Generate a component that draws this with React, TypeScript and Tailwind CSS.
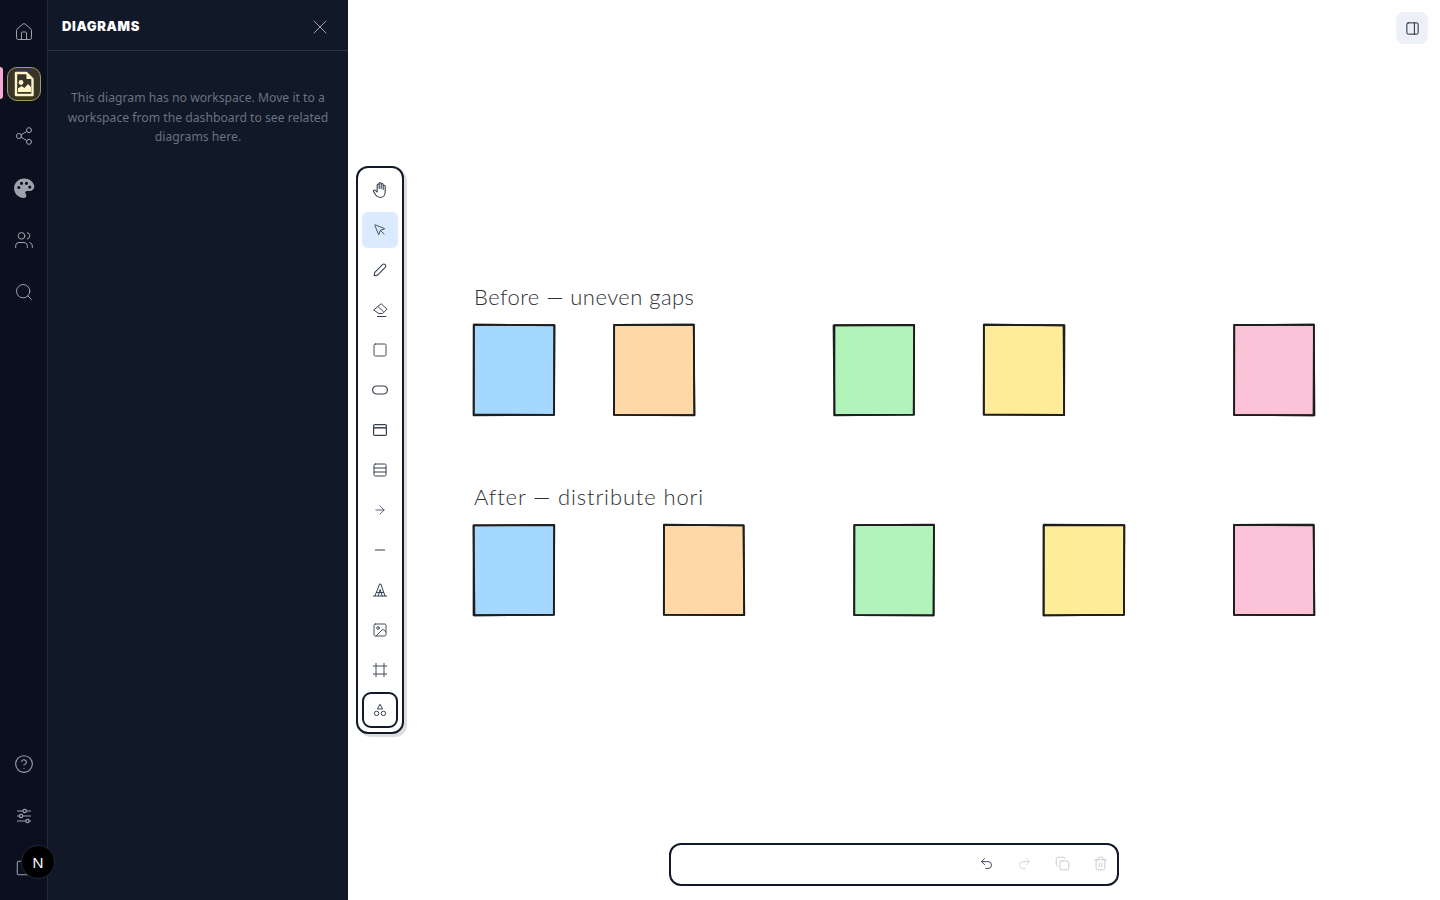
import {
  ArrowRight, CircleHelp, Copy, Frame, Home, Image, Minus, MousePointer, PanelRight,
  Redo2, Rows3, Search, Share2, Square, Trash2, Undo2, Users, X,
} from 'lucide-react';

/* ─── Sketched canvas shapes ─────────────────────────────────────────── */

const row1 = [
  { x: 'left-[124px]', fill: '#a5d8ff', seed: 1 },
  { x: 'left-[264px]', fill: '#ffd8a8', seed: 2 },
  { x: 'left-[484px]', fill: '#b2f2bb', seed: 3 },
  { x: 'left-[634px]', fill: '#ffec99', seed: 4 },
  { x: 'left-[884px]', fill: '#fcc2d7', seed: 5 },
];

const row2 = [
  { x: 'left-[124px]', fill: '#a5d8ff', seed: 6 },
  { x: 'left-[314px]', fill: '#ffd8a8', seed: 7 },
  { x: 'left-[504px]', fill: '#b2f2bb', seed: 8 },
  { x: 'left-[694px]', fill: '#ffec99', seed: 9 },
  { x: 'left-[884px]', fill: '#fcc2d7', seed: 10 },
];

// small repeatable jitter so the two strokes of a box don't sit exactly on top of each other
function jitter(seed: number, n: number) {
  return (((seed * 37 + n * 53) % 11) - 5) * 0.09;
}

function sketchPath(seed: number, o: number) {
  const j = (n: number) => jitter(seed + o * 3, n).toFixed(2);
  const x0 = 2, y0 = 2, x1 = 82, y1 = 92;
  return `M${x0 + +j(1)} ${y0 + +j(2)} L${x1 + +j(3)} ${y0 + +j(4)} L${x1 + +j(5)} ${y1 + +j(6)} L${x0 + +j(7)} ${y1 + +j(8)} Z`;
}

function SketchBox({ className, fill, seed }: { className: string; fill: string; seed: number }) {
  return (
    <svg className={`absolute ${className}`} width="84" height="94" viewBox="0 0 84 94" fill="none">
      <rect x="2" y="2" width="80" height="90" fill={fill} />
      <path d={sketchPath(seed, 0)} stroke="#1e1e1e" strokeWidth="1.8" strokeLinejoin="round" />
      <path d={sketchPath(seed, 1)} stroke="#1e1e1e" strokeWidth="1.8" strokeLinejoin="round" />
    </svg>
  );
}

/* ─── Icons the packages don't have ──────────────────────────────────── */

function DocImageIcon() {
  return (
    <svg width="22" height="26" viewBox="0 0 22 26" fill="none">
      <path d="M3 2h10.5L19.5 8v16H3Z" stroke="#fdf3c4" strokeWidth="2.4" strokeLinejoin="round" />
      <path d="M13.5 2v6h6Z" fill="#fdf3c4" />
      <circle cx="8" cy="11.5" r="2.4" fill="#fdf3c4" />
      <path d="M5 21v-3.5l3.5-2.5 3 2 3.5-4 3 3V21Z" fill="#fdf3c4" />
    </svg>
  );
}

function SlidersIcon() {
  return (
    <svg width="18" height="18" viewBox="0 0 18 18" fill="none" stroke="currentColor" strokeWidth="1.2">
      <path d="M2 4h6M11.5 4H16M2 9h2.500M7.500 9H16M2 14h9M14 14h2" />
      <circle cx="9.700" cy="4" r="1.700" />
      <circle cx="6" cy="9" r="1.700" />
      <circle cx="12.500" cy="14" r="1.700" />
    </svg>
  );
}

function PaletteFilled() {
  return (
    <svg width="22" height="22" viewBox="0 0 24 24" fill="#9ca3af">
      <path fillRule="evenodd" d="M12 1.500C6 1.500 1.200 6.300 1.200 12.200S6 22.800 12 22.800c1.600 0 2.600-1.100 2.600-2.400 0-.7-.3-1.200-.6-1.700-.3-.4-.6-.9-.6-1.400 0-1.100.9-2 2-2h2.400c3 0 5.400-2.200 5.400-5C22.800 5.300 17.900 1.500 12 1.500ZM6.400 13.200a1.700 1.700 0 1 1 0-3.400 1.700 1.700 0 0 1 0 3.400Zm2.900-4.600a1.700 1.700 0 1 1 0-3.400 1.700 1.700 0 0 1 0 3.400Zm5.400 0a1.700 1.700 0 1 1 0-3.400 1.700 1.700 0 0 1 0 3.400Zm3.600 4.100a1.700 1.700 0 1 1 0-3.400 1.700 1.700 0 0 1 0 3.400Z" />
    </svg>
  );
}

function HandIcon() {
  return (
    <svg width="16" height="18" viewBox="0 0 16 18" fill="none" stroke="currentColor" strokeWidth="1.100" strokeLinecap="round" strokeLinejoin="round">
      <path d="M5.200 8.500V4a1 1 0 0 1 2 0v3.500M7.200 7V2.500a1 1 0 0 1 2 0V7.500M9.200 7.500V3.500a1 1 0 0 1 2 0v5M11.200 8V5.200a1 1 0 0 1 2 0V11c0 3-2 5.500-5 5.500-2.500 0-3.500-1-4.500-2.500L1.500 10.500c-.6-1 .8-2 1.700-1.200l2 1.700V8.500" />
    </svg>
  );
}

function PencilIcon() {
  return (
    <svg width="16" height="16" viewBox="0 0 16 16" fill="none" stroke="currentColor" strokeWidth="1.100" strokeLinejoin="round">
      <path d="M2.800 10.400 10.500 2.700a1.900 1.900 0 0 1 2.700 2.700L5.500 13.100l-3.300.6Z" />
    </svg>
  );
}

function EraserIcon() {
  return (
    <svg width="16" height="16" viewBox="0 0 16 16" fill="none" stroke="currentColor" strokeWidth="1" strokeLinecap="round" strokeLinejoin="round">
      <path d="M9.500 2 15 7.200l-4.300 4.300H6.800L2 8.200Z" />
      <path d="M6.500 5 11.500 9.800" />
      <path d="M5.500 14.500h8.500" />
    </svg>
  );
}

function PillIcon() {
  return (
    <svg width="16" height="16" viewBox="0 0 16 16" fill="none" stroke="currentColor" strokeWidth="1.200">
      <rect x="0.600" y="4" width="14.800" height="8" rx="4" />
    </svg>
  );
}

function WindowIcon() {
  return (
    <svg width="16" height="16" viewBox="0 0 16 16" fill="none" stroke="currentColor" strokeWidth="1.200">
      <rect x="1.600" y="2.600" width="12.800" height="10.800" rx="1.200" />
      <path d="M1.600 5.800h12.800" strokeWidth="1.500" />
    </svg>
  );
}

function TextIcon() {
  return (
    <svg width="16" height="16" viewBox="0 0 16 16" fill="none" stroke="currentColor" strokeWidth="1" strokeLinecap="round" strokeLinejoin="round">
      <path d="M1.500 14h3M5.500 14h9" />
      <path d="M3 14 7.600 2h1.200L13 14" />
      <path d="M6.200 14 8.200 7.500 10.200 14" />
      <path d="M5 10.500h6.500" />
    </svg>
  );
}

function ShapesIcon() {
  return (
    <svg width="14" height="14" viewBox="0 0 14 14" fill="none" stroke="currentColor" strokeWidth="1" strokeLinejoin="round">
      <path d="M7 1.200 9.600 6H4.400Z" />
      <circle cx="3.600" cy="10.400" r="2.200" />
      <circle cx="10.400" cy="10.400" r="2.200" />
    </svg>
  );
}

/* ─── Data ───────────────────────────────────────────────────────────── */

const tools = [
  { icon: <HandIcon />, label: 'Hand' },
  { icon: <MousePointer size={14} strokeWidth={1.5} />, label: 'Select', active: true },
  { icon: <PencilIcon />, label: 'Pencil' },
  { icon: <EraserIcon />, label: 'Eraser' },
  { icon: <Square size={16} strokeWidth={1.4} />, label: 'Rectangle' },
  { icon: <PillIcon />, label: 'Pill' },
  { icon: <WindowIcon />, label: 'Window' },
  { icon: <Rows3 size={16} strokeWidth={1.5} />, label: 'Table' },
  { icon: <ArrowRight size={14} strokeWidth={1.4} />, label: 'Arrow' },
  { icon: <Minus size={16} strokeWidth={1.5} />, label: 'Line' },
  { icon: <TextIcon />, label: 'Text' },
  { icon: <Image size={16} strokeWidth={1.4} />, label: 'Image' },
  { icon: <Frame size={16} strokeWidth={1.4} />, label: 'Frame' },
];

const railTop = [
  { icon: <Home size={20} strokeWidth={1.2} />, label: 'Home' },
  { icon: <DocImageIcon />, label: 'Diagrams', active: true },
  { icon: <Share2 size={20} strokeWidth={1.2} />, label: 'Share' },
  { icon: <PaletteFilled />, label: 'Theme' },
  { icon: <Users size={20} strokeWidth={1.2} />, label: 'People' },
  { icon: <Search size={20} strokeWidth={1.2} />, label: 'Search' },
];

export default function App() {
  return (
    <div className="flex h-screen w-full overflow-hidden bg-white font-['Noto_Sans',sans-serif]">
      {/* Icon rail */}
      <aside className="relative flex w-12 flex-col justify-between border-r border-[#232a3a] bg-[#0b101e] py-3 text-[#9ca3af]">
        <nav className="flex flex-col gap-3">
          {railTop.map(({ icon, label, active }) => (
            <button key={label} aria-label={label} className="relative flex h-10 w-full items-center justify-center">
              {active && <span className="absolute left-0 top-[3px] h-[32px] w-[3px] rounded-r bg-[#f9a8d4]" />}
              {active ? (
                <span className="flex h-[34px] w-[34px] items-center justify-center rounded-[10px] border border-[#a39a5f] bg-[#37352a]">
                  {icon}
                </span>
              ) : icon}
            </button>
          ))}
        </nav>
        <div className="flex flex-col gap-3">
          <button aria-label="Help" className="flex h-10 items-center justify-center"><CircleHelp size={20} strokeWidth={1.3} /></button>
          <button aria-label="Settings" className="flex h-10 items-center justify-center"><SlidersIcon /></button>
          <button aria-label="Pages" className="flex h-10 items-center justify-center"><Square size={18} strokeWidth={1.4} /></button>
        </div>
        <div className="absolute left-[21px] top-[845px] z-10 flex h-[34px] w-[34px] items-center justify-center rounded-full border border-[#1f2937] bg-black text-[15px] text-white">
          N
        </div>
      </aside>

      {/* Diagrams panel */}
      <section className="flex w-[300px] flex-col bg-[#111827]">
        <header className="flex h-[51px] items-center justify-between border-b border-[#2a3140] pl-[14px] pr-[16px] pt-1">
          <h2 className="font-['Inter',sans-serif] text-[13px] font-black tracking-[0.05em] text-white">DIAGRAMS</h2>
          <X size={24} strokeWidth={1} className="text-[#9ca3af]" />
        </header>
        <p className="px-4 pt-[37px] text-center text-[12.2px] leading-[19.5px] text-[#6b7280]">
          This diagram has no workspace. Move it to a workspace from the dashboard to see related diagrams here.
        </p>
      </section>

      {/* Canvas */}
      <main className="relative flex-1">
        <button aria-label="Toggle panel" className="absolute right-3 top-3 flex h-8 w-8 items-center justify-center rounded-lg bg-[#eef0f7] text-[#1f2937]">
          <PanelRight size={15} strokeWidth={1.6} />
        </button>

        <p className="absolute left-[126px] top-[281px] font-['Lato',sans-serif] text-[22px] font-light leading-[32px] tracking-[0.02em] text-[#2f2f35]">
          Before — uneven gaps
        </p>
        {row1.map(b => <SketchBox key={b.seed} className={`${b.x} top-[323px]`} fill={b.fill} seed={b.seed} />)}

        <p className="absolute left-[126px] top-[481px] font-['Lato',sans-serif] text-[22px] font-light leading-[32px] tracking-[0.04em] text-[#2f2f35]">
          After — distribute hori
        </p>
        {row2.map(b => <SketchBox key={b.seed} className={`${b.x} top-[523px]`} fill={b.fill} seed={b.seed} />)}

        {/* Tool rail */}
        <div className="absolute left-2 top-[166px] flex w-12 flex-col gap-1 rounded-xl border-2 border-[#111827] bg-white p-1 text-[#374151] shadow-[3px_3px_0_rgba(17,24,39,0.15)]">
          {tools.map(({ icon, label, active }) => (
            <button
              key={label}
              aria-label={label}
              className={`flex h-9 w-9 items-center justify-center rounded-md ${active ? 'bg-[#dbeafe]' : ''}`}
            >
              {icon}
            </button>
          ))}
          <button aria-label="Shapes" className="flex h-9 w-9 items-center justify-center rounded-[9px] border-2 border-[#111827]">
            <ShapesIcon />
          </button>
        </div>

        {/* Actions bar */}
        <div className="absolute left-[321px] top-[843px] flex h-[43px] w-[450px] items-center justify-end gap-[23px] rounded-xl border-2 border-[#111827] bg-white pb-[2px] pr-[9px]">
          <Undo2 size={15} strokeWidth={1.5} className="text-[#374151]" />
          <Redo2 size={15} strokeWidth={1.5} className="text-[#d1d5db]" />
          <Copy size={15} strokeWidth={1.5} className="text-[#c4c8cf]" />
          <Trash2 size={15} strokeWidth={1.5} className="text-[#c4c8cf]" />
        </div>
      </main>
    </div>
  );
}
